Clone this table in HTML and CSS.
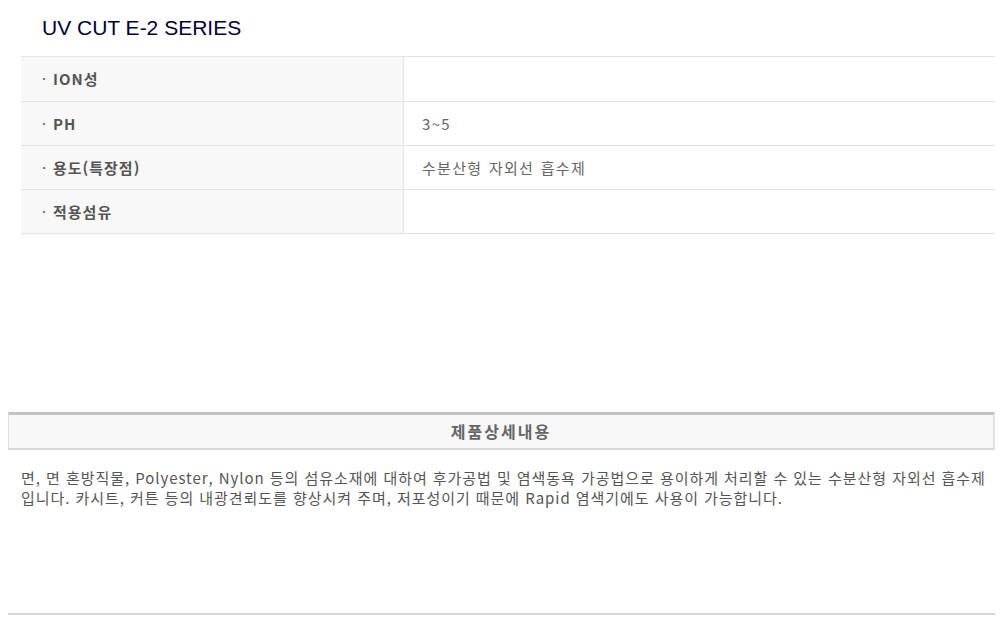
FILE: index.html
```html
<!DOCTYPE html>
<html lang="ko">
<head>
<meta charset="utf-8">
<title>UV CUT E-2 SERIES</title>
<link rel="stylesheet" href="styles.css">
</head>
<body>
<div class="page">
  <h1 class="title">UV CUT E-2 SERIES</h1>
  <table class="spec">
    <tr class="first"><th><span class="dot">·</span>ION성</th><td></td></tr>
    <tr><th><span class="dot">·</span>PH</th><td>3~5</td></tr>
    <tr><th><span class="dot">·</span>용도(특장점)</th><td>수분산형 자외선 흡수제</td></tr>
    <tr><th><span class="dot">·</span>적용섬유</th><td></td></tr>
  </table>
  <div class="detail">
    <div class="detail-head">제품상세내용</div>
    <p class="detail-text">면, 면 혼방직물, Polyester, Nylon 등의 섬유소재에 대하여 후가공법 및 염색동욕 가공법으로 용이하게 처리할 수 있는 수분산형 자외선 흡수제입니다. 카시트, 커튼 등의 내광견뢰도를 향상시켜 주며, 저포성이기 때문에 Rapid 염색기에도 사용이 가능합니다.</p>
  </div>
  <div class="end-line"></div>
</div>
</body>
</html>
```

FILE: styles.css
```css
html, body {
  margin: 0;
  padding: 0;
  background: #ffffff;
}
.page {
  width: 987px;
  padding: 0 11px 0 8px;
  font-family: "Noto Sans CJK KR", "Noto Sans", sans-serif;
}
.title {
  margin: 0;
  height: 56px;
  box-sizing: border-box;
  padding: 15px 0 0 34px;
  font-family: "Liberation Sans", "DejaVu Sans", sans-serif;
  font-weight: normal;
  font-size: 21px;
  line-height: 26px;
  color: #000033;
}
.spec {
  margin-left: 13px;
  width: 974px;
  border-collapse: collapse;
  border-top: 1px solid #e3e3e3;
}
.spec tr {
  height: 44px;
  border-bottom: 1px solid #e3e3e3;
}
.spec tr.first {
  height: 45px;
}
.spec th {
  width: 361px;
  padding: 0 0 0 21px;
  text-align: left;
  background: #f8f8f8;
  border-right: 1px solid #e3e3e3;
  font-size: 15px;
  font-weight: bold;
  color: #555555;
  line-height: 20px;
  letter-spacing: 1px;
}
.dot {
  display: inline-block;
  width: 11px;
  font-weight: normal;
  letter-spacing: 0;
}
.spec td {
  padding: 0 0 0 18px;
  font-size: 15px;
  color: #666666;
  line-height: 20px;
  letter-spacing: 1.3px;
  word-spacing: 1px;
}
.detail {
  margin-top: 178px;
}
.detail-head {
  height: 33px;
  border-top: 3px solid #c3c3c3;
  border-bottom: 2px solid #d8d8d8;
  border-left: 1px solid #e0e0e0;
  border-right: 2px solid #e0e0e0;
  background: #f8f8f8;
  text-align: center;
  font-size: 16px;
  font-weight: bold;
  line-height: 33px;
  letter-spacing: 2px;
  color: #666666;
}
.detail-text {
  margin: 0;
  padding: 18px 0 0 13px;
  height: 145px;
  font-size: 15px;
  line-height: 20px;
  letter-spacing: 0.95px;
  word-spacing: 0;
  color: #555555;
}
.end-line {
  height: 2px;
  background: #d6d6d6;
}
```
